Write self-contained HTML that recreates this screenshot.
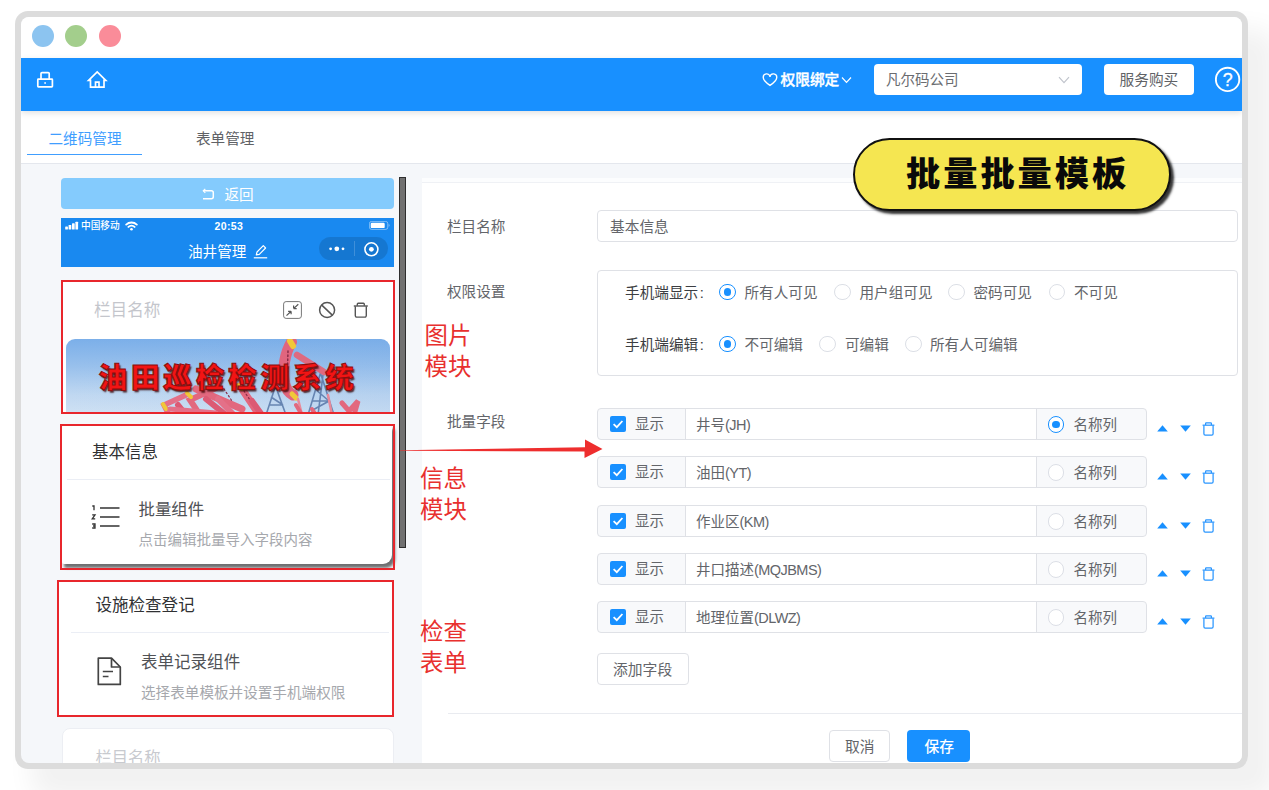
<!DOCTYPE html>
<html lang="zh-CN">
<head>
<meta charset="utf-8">
<title>批量批量模板</title>
<style>
*{box-sizing:border-box;margin:0;padding:0}
html,body{width:1269px;height:790px;overflow:hidden;background:#fff}
body{font-family:"Liberation Sans","Noto Sans CJK SC",sans-serif;color:#63656a;position:relative}
.abs{position:absolute}
.t{position:absolute;white-space:nowrap;line-height:20px;height:20px;font-size:14.6px}
/* window frame */
#shadow{left:15px;top:11px;width:1233px;height:758px;border-radius:13px;box-shadow:22px 24px 26px 6px rgba(0,0,0,.055)}
#frame{left:15px;top:11px;width:1233px;height:758px;border-radius:13px;background:#dcdcdc}
#win{left:21px;top:17px;width:1221px;height:746px;border-radius:8px;background:#f5f7fa;overflow:hidden}
/* everything inside #win uses page coords via offset wrapper */
#pg{position:absolute;left:-21px;top:-17px;width:1269px;height:790px}
.dot{width:22px;height:22px;border-radius:50%;top:25px}
#topbar{left:21px;top:17px;width:1221px;height:41px;background:#fff}
#blue{left:21px;top:58px;width:1221px;height:53px;background:#1890ff;box-shadow:0 2px 6px rgba(0,0,0,.12)}
#tabs{left:21px;top:111px;width:1221px;height:53px;background:#fff;border-bottom:1px solid #e4e7ed}
.red{border:2px solid #e8262c}
.card{background:#fff;border-radius:8px}
.inp{background:#fff;border:1px solid #dfe1e6;border-radius:4px}
.radio{width:16.5px;height:16.5px;margin:-.25px 0 0 -.25px;border-radius:50%;border:1px solid #dcdfe6;background:#fff}
.radio.on{border-color:#1890ff}
.radio.on::after{content:"";position:absolute;left:3.500px;top:3.500px;width:7.500px;height:7.500px;border-radius:50%;background:#1890ff}
.cb{width:16px;height:16px;border-radius:2px;background:#1890ff}
.anno{color:#e8302e;font-size:23.4px;line-height:30.5px;height:auto;white-space:pre}
</style>
</head>
<body>
<div class="abs" id="shadow"></div>
<div class="abs" id="frame"></div>
<div class="abs" id="win"><div id="pg">

<div class="abs" id="topbar"></div>
<div class="abs dot" style="left:32px;background:#8cc4f0"></div>
<div class="abs dot" style="left:65px;background:#a3ce8c"></div>
<div class="abs dot" style="left:98.5px;background:#fa8c99"></div>

<div class="abs" id="tabs"></div>
<div class="abs" id="blue"></div>

<!-- SECTION:HEADER -->
<svg class="abs" style="left:35px;top:69px" width="20" height="20" viewBox="0 0 20 20" fill="none" stroke="#fff" stroke-width="1.7">
 <rect x="2.8" y="10.2" width="14.6" height="7.6" rx=".6"/>
 <path d="M6 10.2V4.6a1 1 0 0 1 1-1h6.2a1 1 0 0 1 1 1v5.600"/>
 <rect x="9.300" y="13.2" width="1.6" height="1.6" fill="#fff" stroke="none"/>
</svg>
<svg class="abs" style="left:86px;top:69px" width="22" height="20" viewBox="0 0 22 20" fill="none" stroke="#fff" stroke-width="1.7" stroke-linejoin="miter">
 <path d="M2.600 11.400L11.200 2.900L19.800 11.400H18V18.100H4.500V11.400Z"/>
 <path d="M9.500 18.100V13.200H13V18.100"/>
</svg>
<svg class="abs" style="left:762px;top:72.500px" width="16" height="14" viewBox="0 0 16 14" fill="none" stroke="#fff" stroke-width="1.4">
 <path d="M8 12.400C4 9.600 1.300 7.400 1.300 4.700a3.200 3.200 0 0 1 6.700-.9a3.200 3.200 0 0 1 6.700.9c0 2.700-2.700 4.900-6.700 7.700Z"/>
</svg>
<div class="t" style="left:780.500px;top:69.500px;color:#fff;font-weight:500;-webkit-text-stroke:.35px #fff;font-size:14.7px;letter-spacing:0">权限绑定</div>
<svg class="abs" style="left:841px;top:75.500px" width="11" height="8" viewBox="0 0 11 8" fill="none" stroke="#fff" stroke-width="1.2"><path d="M1 1.500L5.500 6.300L10 1.500"/></svg>
<div class="abs" style="left:874px;top:64px;width:208px;height:31px;background:#fff;border-radius:4px"></div>
<div class="t" style="left:886px;top:69.500px;color:#6a6c70;font-size:14.5px">凡尔码公司</div>
<svg class="abs" style="left:1058px;top:75.500px" width="12" height="8" viewBox="0 0 12 8" fill="none" stroke="#c0c4cc" stroke-width="1.2"><path d="M1 1.200L6 6.600L11 1.200"/></svg>
<div class="abs" style="left:1103.500px;top:64px;width:90.500px;height:31px;background:#fff;border-radius:4px"></div>
<div class="t" style="left:1119.500px;top:69.500px;color:#606266;font-size:14.7px">服务购买</div>
<svg class="abs" style="left:1213px;top:65px" width="29" height="29" viewBox="0 0 29 29"><circle cx="14.600" cy="14.400" r="11.700" fill="none" stroke="#fff" stroke-width="1.900"/></svg>
<div class="t" style="left:1222.700px;top:70px;color:#fff;font-size:17.8px;-webkit-text-stroke:.3px #fff;font-family:'Liberation Sans',sans-serif">?</div>
<!-- tabs -->
<div class="t" style="left:48.500px;top:128.500px;color:#409eff;font-size:14.6px">二维码管理</div>
<div class="abs" style="left:27px;top:153.500px;width:115px;height:1.600px;background:#409eff"></div>
<div class="t" style="left:196px;top:128.500px;color:#606266;font-size:14.6px">表单管理</div>

<!-- SECTION:LEFT -->
<!-- return button -->
<div class="abs" style="left:61px;top:177.500px;width:333px;height:31px;background:#84cbfd;border-radius:4px"></div>
<svg class="abs" style="left:202px;top:188px" width="13" height="13" viewBox="0 0 13 13" fill="none" stroke="#fff" stroke-width="1.5"><path d="M1.500 2.800H9.300a2 2 0 0 1 2 2V8.700a2 2 0 0 1-2 2H1"/><path d="M3.300 .8L1.300 2.800L3.300 4.800" stroke-width="1.2"/></svg>
<div class="t" style="left:224.500px;top:184.500px;color:#fff;font-size:14.6px">返回</div>
<!-- phone header -->
<div class="abs" style="left:61px;top:217.500px;width:333px;height:49px;background:#1989f0"></div>
<svg class="abs" style="left:65px;top:221px" width="14" height="9" viewBox="0 0 14 9" fill="#fff"><rect x=".2" y="5.400" width="2.700" height="3.200" rx=".6"/><rect x="3.600" y="3.900" width="2.700" height="4.700" rx=".6"/><rect x="7" y="2.300" width="2.700" height="6.300" rx=".6"/><rect x="10.400" y=".7" width="2.700" height="7.900" rx=".6"/></svg>
<div class="t" style="left:81px;top:215.500px;color:#fff;font-size:9.7px;font-weight:500">中国移动</div>
<svg class="abs" style="left:124.500px;top:220.500px" width="13" height="10" viewBox="0 0 13 10" fill="none" stroke="#fff" stroke-width="1.9" stroke-linecap="round"><path d="M1.200 3.600a7.600 7.600 0 0 1 10.600 0"/><path d="M3.400 5.900a4.500 4.500 0 0 1 6.200 0"/><circle cx="6.500" cy="8.300" r="1.300" fill="#fff" stroke="none"/></svg>
<div class="t" style="left:214.500px;top:215.500px;color:#fff;font-size:10.5px;font-weight:700;letter-spacing:.35px;font-family:'Liberation Sans',sans-serif">20:53</div>
<svg class="abs" style="left:369px;top:221px" width="22" height="9" viewBox="0 0 22 9"><rect x=".4" y=".4" width="18.400" height="8" rx="2.200" fill="none" stroke="#fff" stroke-opacity=".55" stroke-width=".8"/><rect x="1.700" y="1.700" width="14" height="5.400" rx="1.200" fill="#fff"/><path d="M19.800 3v2.800c.9-.3.900-2.500 0-2.800Z" fill="#fff" fill-opacity=".6"/></svg>
<div class="t" style="left:188px;top:242px;color:#fff;font-size:14.6px">油井管理</div>
<svg class="abs" style="left:252.500px;top:243.500px" width="15" height="15" viewBox="0 0 15 15" fill="none" stroke="#fff" stroke-width="1.2" stroke-linejoin="round"><path d="M.8 13.800H14.200"/><path d="M3.300 10.800L4 8L10.300 1.700L12.600 4L6.300 10.300Z"/></svg>
<div class="abs" style="left:319px;top:237px;width:69px;height:23px;border-radius:12px;background:rgba(0,0,0,.13)"></div>
<div class="abs" style="left:354px;top:241px;width:1px;height:15px;background:rgba(255,255,255,.18)"></div>
<svg class="abs" style="left:327px;top:244px" width="20" height="10" viewBox="0 0 20 10" fill="#fff"><circle cx="3.600" cy="4.800" r="1.400"/><circle cx="9.800" cy="4.800" r="2.400"/><circle cx="16" cy="4.800" r="1.400"/></svg>
<svg class="abs" style="left:363px;top:240.500px" width="17" height="17" viewBox="0 0 17 17"><circle cx="8.400" cy="8.300" r="6.500" fill="none" stroke="#fff" stroke-width="1.600"/><circle cx="8.400" cy="8.300" r="2.400" fill="#fff"/></svg>

<!-- card 1 (image module) -->
<div class="abs" style="left:61px;top:280px;width:333px;height:133px;background:#fff;overflow:hidden">
 <div class="abs" style="left:4.500px;top:58.500px;width:324.500px;height:90px;border-radius:9px;overflow:hidden;background:linear-gradient(180deg,#7bafe9 0%,#98c0ec 30%,#c0d8f1 62%,#dbe8f5 100%)">
<svg class="abs" style="left:0;top:0" width="325" height="90" viewBox="0 0 325 90">
  <defs><linearGradient id="skyr" x1="0" y1="0" x2="1" y2="0"><stop offset="0" stop-color="#8fb9ea" stop-opacity=".0"/><stop offset="1" stop-color="#6c9fe0" stop-opacity=".12"/></linearGradient></defs>
  <rect width="325" height="90" fill="url(#skyr)"/>
  <g fill="none" stroke="#5d7cab" stroke-width="1.600" opacity=".9">
   <path d="M254.500 34L242 76M254.500 34L268 76M257 36L252 76M246 62H264M249 50L263 62L245 72"/>
   <path d="M209.500 47L200 76M209.500 47L220 76M203 66H217M205 58L217 66"/>
  </g>
  <g stroke-linecap="round" fill="none">
   <path d="M225.500 3C219 14 216 30 218.500 44C220 50 223 54 227 56" stroke="#e0657e" stroke-width="11"/>
   <path d="M231 16L258 33" stroke="#de6a80" stroke-width="6.500"/>
   <path d="M224 2L227 7" stroke="#f0c838" stroke-width="6"/>
   <path d="M226 55L230 59" stroke="#f0c838" stroke-width="5"/>
   <path d="M222 12L221 44" stroke="#8a2c48" stroke-width="1.500" stroke-dasharray="1.500 2.500"/>
   <path d="M130 50L176 70" stroke="#e2687e" stroke-width="7"/>
   <path d="M174 47L192 74" stroke="#e2687e" stroke-width="7.500"/>
   <path d="M150 49L124 61L134 76" stroke="#e2687e" stroke-width="6"/>
   <path d="M178 52L190 70" stroke="#8a2c48" stroke-width="1.200" stroke-dasharray="1.500 2.500"/>
   <path d="M120 56L98 66L103 76" stroke="#e47088" stroke-width="5.500"/>
   <path d="M152 60L168 76" stroke="#e47088" stroke-width="6"/>
   <path d="M121 54L125 58" stroke="#f0c838" stroke-width="4"/>
   <path d="M97 65L100 70" stroke="#f0c838" stroke-width="4"/>
   <path d="M172 46L176 50" stroke="#f0c838" stroke-width="4"/>
   <path d="M276 64L283 72L292 62L288 76" stroke="#e2687e" stroke-width="5"/>
   <path d="M232 60L236 76M262 56L266 76" stroke="#e88a9a" stroke-width="2.500"/>
   <path d="M140 60L160 76M112 66L120 76M186 62L196 76" stroke="#dc5a74" stroke-width="6"/>
   <path d="M104 70L150 74" stroke="#e47088" stroke-width="5"/>
   <path d="M158 50L166 62" stroke="#8a2c48" stroke-width="1.200" stroke-dasharray="1.500 2.500"/>
   <path d="M230 66L236 76M246 70L250 76" stroke="#e2687e" stroke-width="4"/>
  </g>
</svg>
  <div class="t" style="left:33px;top:19.500px;height:40px;line-height:40px;font-size:28.6px;font-weight:900;letter-spacing:3.800px;color:#f21414;-webkit-text-stroke:1px #8a0e0e;text-shadow:1.500px 2px 1.500px rgba(50,0,0,.8)">油田巡检检测系统</div>
 </div>
</div>
<div class="t" style="left:94px;top:300.500px;color:#c4c6cc;font-size:16.6px">栏目名称</div>
<svg class="abs" style="left:283px;top:300.500px" width="19" height="18" viewBox="0 0 19 18" fill="none" stroke="#555" stroke-width="1"><rect x=".6" y=".6" width="17.800" height="16.800" rx="2.500" stroke="#777"/><path d="M15.300 3.200L10.600 7.600M10.600 7.600V4.600M10.600 7.600H13.700" stroke-width="1.200"/><path d="M3.500 14.600L8.100 10.300M8.100 10.300V13.300M8.100 10.300H5.100" stroke-width="1.200"/></svg>
<svg class="abs" style="left:317.500px;top:300.500px" width="18" height="18" viewBox="0 0 18 18" fill="none" stroke="#555" stroke-width="1.500"><circle cx="9.100" cy="9" r="7.500"/><path d="M3.800 4.100L14.300 14.100"/></svg>
<svg class="abs" style="left:352.500px;top:301.500px" width="16" height="16" viewBox="0 0 16 16" fill="none" stroke="#555" stroke-width="1.400"><path d="M.8 4H14.800"/><path d="M4.300 3.800V2.200a.9.900 0 0 1 .9-.9h5.200a.9.900 0 0 1 .9.900V3.800"/><path d="M2.300 4.200V13.600a1.500 1.500 0 0 0 1.500 1.500h8a1.500 1.500 0 0 0 1.500-1.500V4.200"/></svg>
<div class="abs red" style="left:60.500px;top:279.500px;width:334px;height:134px"></div>

<!-- scrollbar -->
<div class="abs" style="left:398.500px;top:176.500px;width:7.500px;height:371px;background:#717171;border:1px solid #2e2e2e"></div>

<!-- card 2 (basic info) -->
<div class="abs card" style="left:62px;top:426px;width:330px;height:138px;border-radius:2px 2px 9px 2px;box-shadow:2.500px 3.500px 3px rgba(0,0,0,.55)"></div>
<div class="t" style="left:92px;top:441.600px;color:#303133;font-size:16.5px">基本信息</div>
<div class="abs" style="left:66.500px;top:479px;width:323px;height:1px;background:#ebeef5"></div>
<svg class="abs" style="left:91px;top:503px" width="30" height="27" viewBox="0 0 30 27" fill="none" stroke="#333" stroke-width="1.700"><path d="M9 5H28.500M9 14H28.500M9 23H28.500"/><g stroke-width="1.300"><path d="M1.300 3H3V7.200"/><path d="M1.200 11.800H4L1.200 15.800H4.200"/><path d="M1.200 21H4V25H1.200M2 23H4"/></g></svg>
<div class="t" style="left:138.500px;top:498.700px;color:#505256;font-size:16.4px">批量组件</div>
<div class="t" style="left:138.500px;top:529.500px;color:#a6a8ad;font-size:14.5px">点击编辑批量导入字段内容</div>
<div class="abs red" style="left:60px;top:424px;width:334.500px;height:146px"></div>

<!-- card 3 (check form) -->
<div class="abs" style="left:57px;top:580px;width:336.500px;height:136px;background:#fff"></div>
<div class="t" style="left:95.500px;top:596.200px;color:#303133;font-size:16.55px">设施检查登记</div>
<div class="abs" style="left:71px;top:631.500px;width:318px;height:1px;background:#ebeef5"></div>
<svg class="abs" style="left:97px;top:656.500px" width="25" height="29" viewBox="0 0 25 29" fill="none" stroke="#444" stroke-width="1.700" stroke-linejoin="round"><path d="M1.300 1.200H14.500L23.300 10V27.400H1.300Z"/><path d="M14.500 1.200V10H23.300"/><path d="M5.800 14.500H16M5.800 19.500H11.500"/></svg>
<div class="t" style="left:141px;top:653px;color:#505256;font-size:16.55px">表单记录组件</div>
<div class="t" style="left:141px;top:682.500px;color:#a6a8ad;font-size:14.6px">选择表单模板并设置手机端权限</div>
<div class="abs red" style="left:56.500px;top:579.500px;width:337.500px;height:137.500px"></div>

<!-- card 4 (bottom) -->
<div class="abs card" style="left:61.500px;top:727.500px;width:332px;height:60px;border:1px solid #eceef3"></div>
<div class="t" style="left:95.500px;top:747px;color:#c8cacf;font-size:16.3px">栏目名称</div>

<!-- SECTION:RIGHT -->
<div class="abs" style="left:421.500px;top:177.500px;width:830px;height:600px;background:#fff"></div>
<div class="abs" style="left:421.500px;top:177.500px;width:830px;height:5.500px;background:#fcfdfe;border-bottom:1px solid #eff1f5"></div>
<div class="t" style="left:447px;top:217px;font-size:14.6px">栏目名称</div>
<div class="abs inp" style="left:597px;top:210px;width:641px;height:32px"></div>
<div class="t" style="left:610px;top:217px;font-size:14.7px">基本信息</div>
<div class="t" style="left:447px;top:281.500px;font-size:14.6px">权限设置</div>
<div class="abs inp" style="left:597px;top:270px;width:641px;height:106px"></div>
<div class="t" style="left:625px;top:282.500px;font-size:14.65px;color:#3c3e42">手机端显示<span style="margin-left:1.500px">:</span></div>
<div class="abs radio on" style="left:719.500px;top:284px"></div>
<div class="t" style="left:744.500px;top:282.500px;font-size:14.6px">所有人可见</div>
<div class="abs radio" style="left:834.500px;top:284px"></div>
<div class="t" style="left:859.500px;top:282.500px;font-size:14.6px">用户组可见</div>
<div class="abs radio" style="left:948.500px;top:284px"></div>
<div class="t" style="left:973.500px;top:282.500px;font-size:14.6px">密码可见</div>
<div class="abs radio" style="left:1049px;top:284px"></div>
<div class="t" style="left:1074px;top:282.500px;font-size:14.6px">不可见</div>
<div class="t" style="left:625px;top:334.500px;font-size:14.65px;color:#3c3e42">手机端编辑<span style="margin-left:1.500px">:</span></div>
<div class="abs radio on" style="left:719.500px;top:336px"></div>
<div class="t" style="left:744.500px;top:334.500px;font-size:14.6px">不可编辑</div>
<div class="abs radio" style="left:819.500px;top:336px"></div>
<div class="t" style="left:845px;top:334.500px;font-size:14.6px">可编辑</div>
<div class="abs radio" style="left:905.500px;top:336px"></div>
<div class="t" style="left:930px;top:334.500px;font-size:14.6px">所有人可编辑</div>
<div class="t" style="left:447px;top:411.500px;font-size:14.6px">批量字段</div>
<div class="abs inp" style="left:597px;top:408px;width:549.500px;height:32px;background:#f8f9fb"></div>
<div class="abs" style="left:684.500px;top:409px;width:352px;height:30px;background:#fff;border-left:1px solid #dfe1e6;border-right:1px solid #dfe1e6"></div>
<div class="abs cb" style="left:610px;top:415.8px"><svg class="abs" style="left:0;top:0" width="16" height="16" viewBox="0 0 16 16" fill="none" stroke="#fff" stroke-width="1.800"><path d="M3.600 8.200L6.800 11.200L12.400 5"/></svg></div>
<div class="t" style="left:635px;top:413.7px;font-size:14.4px">显示</div>
<div class="t" style="left:696px;top:415.2px;font-size:14.5px">井号<span style="letter-spacing:-.55px">(JH)</span></div>
<div class="abs radio on" style="left:1048.200px;top:416.4px"></div>
<div class="t" style="left:1073.500px;top:414.9px;font-size:14.5px">名称列</div>
<svg class="abs" style="left:1156.500px;top:425.2px" width="11" height="7" viewBox="0 0 11 7"><path d="M5.500 .2L10.800 6.600H.2Z" fill="#1890ff"/></svg>
<svg class="abs" style="left:1179.500px;top:425.2px" width="11" height="7" viewBox="0 0 11 7"><path d="M5.500 6.800L10.800 .4H.2Z" fill="#1890ff"/></svg>
<svg class="abs" style="left:1201.500px;top:421.8px" width="13" height="14" viewBox="0 0 13 14" fill="none" stroke="#2a96ff" stroke-width="1.250"><path d="M.6 3.200H12.400"/><path d="M3.600 3V1.600a.7.700 0 0 1 .7-.7h4.400a.7.700 0 0 1 .7.700V3"/><path d="M1.900 3.400V11.800a1.300 1.300 0 0 0 1.300 1.300h6.600a1.300 1.300 0 0 0 1.300-1.300V3.400"/></svg>
<div class="abs inp" style="left:597px;top:456px;width:549.500px;height:32px;background:#f8f9fb"></div>
<div class="abs" style="left:684.500px;top:457px;width:352px;height:30px;background:#fff;border-left:1px solid #dfe1e6;border-right:1px solid #dfe1e6"></div>
<div class="abs cb" style="left:610px;top:463.8px"><svg class="abs" style="left:0;top:0" width="16" height="16" viewBox="0 0 16 16" fill="none" stroke="#fff" stroke-width="1.800"><path d="M3.600 8.200L6.800 11.200L12.400 5"/></svg></div>
<div class="t" style="left:635px;top:461.7px;font-size:14.4px">显示</div>
<div class="t" style="left:696px;top:463.2px;font-size:14.5px">油田<span style="letter-spacing:-.55px">(YT)</span></div>
<div class="abs radio" style="left:1048.200px;top:464.4px"></div>
<div class="t" style="left:1073.500px;top:462.9px;font-size:14.5px">名称列</div>
<svg class="abs" style="left:1156.500px;top:473.2px" width="11" height="7" viewBox="0 0 11 7"><path d="M5.500 .2L10.800 6.600H.2Z" fill="#1890ff"/></svg>
<svg class="abs" style="left:1179.500px;top:473.2px" width="11" height="7" viewBox="0 0 11 7"><path d="M5.500 6.800L10.800 .4H.2Z" fill="#1890ff"/></svg>
<svg class="abs" style="left:1201.500px;top:469.8px" width="13" height="14" viewBox="0 0 13 14" fill="none" stroke="#2a96ff" stroke-width="1.250"><path d="M.6 3.200H12.400"/><path d="M3.600 3V1.600a.7.700 0 0 1 .7-.7h4.400a.7.700 0 0 1 .7.700V3"/><path d="M1.900 3.400V11.800a1.300 1.300 0 0 0 1.300 1.300h6.600a1.300 1.300 0 0 0 1.300-1.300V3.400"/></svg>
<div class="abs inp" style="left:597px;top:505px;width:549.500px;height:32px;background:#f8f9fb"></div>
<div class="abs" style="left:684.500px;top:506px;width:352px;height:30px;background:#fff;border-left:1px solid #dfe1e6;border-right:1px solid #dfe1e6"></div>
<div class="abs cb" style="left:610px;top:512.8px"><svg class="abs" style="left:0;top:0" width="16" height="16" viewBox="0 0 16 16" fill="none" stroke="#fff" stroke-width="1.800"><path d="M3.600 8.200L6.800 11.200L12.400 5"/></svg></div>
<div class="t" style="left:635px;top:510.7px;font-size:14.4px">显示</div>
<div class="t" style="left:696px;top:512.2px;font-size:14.5px">作业区<span style="letter-spacing:-.55px">(KM)</span></div>
<div class="abs radio" style="left:1048.200px;top:513.4px"></div>
<div class="t" style="left:1073.500px;top:511.9px;font-size:14.5px">名称列</div>
<svg class="abs" style="left:1156.500px;top:522.2px" width="11" height="7" viewBox="0 0 11 7"><path d="M5.500 .2L10.800 6.600H.2Z" fill="#1890ff"/></svg>
<svg class="abs" style="left:1179.500px;top:522.2px" width="11" height="7" viewBox="0 0 11 7"><path d="M5.500 6.800L10.800 .4H.2Z" fill="#1890ff"/></svg>
<svg class="abs" style="left:1201.500px;top:518.8px" width="13" height="14" viewBox="0 0 13 14" fill="none" stroke="#2a96ff" stroke-width="1.250"><path d="M.6 3.200H12.400"/><path d="M3.600 3V1.600a.7.700 0 0 1 .7-.7h4.400a.7.700 0 0 1 .7.700V3"/><path d="M1.900 3.400V11.800a1.300 1.300 0 0 0 1.300 1.300h6.600a1.300 1.300 0 0 0 1.300-1.300V3.400"/></svg>
<div class="abs inp" style="left:597px;top:553px;width:549.500px;height:32px;background:#f8f9fb"></div>
<div class="abs" style="left:684.500px;top:554px;width:352px;height:30px;background:#fff;border-left:1px solid #dfe1e6;border-right:1px solid #dfe1e6"></div>
<div class="abs cb" style="left:610px;top:560.8px"><svg class="abs" style="left:0;top:0" width="16" height="16" viewBox="0 0 16 16" fill="none" stroke="#fff" stroke-width="1.800"><path d="M3.600 8.200L6.800 11.200L12.400 5"/></svg></div>
<div class="t" style="left:635px;top:558.7px;font-size:14.4px">显示</div>
<div class="t" style="left:696px;top:560.2px;font-size:14.5px">井口描述<span style="letter-spacing:-.55px">(MQJBMS)</span></div>
<div class="abs radio" style="left:1048.200px;top:561.4px"></div>
<div class="t" style="left:1073.500px;top:559.9px;font-size:14.5px">名称列</div>
<svg class="abs" style="left:1156.500px;top:570.2px" width="11" height="7" viewBox="0 0 11 7"><path d="M5.500 .2L10.800 6.600H.2Z" fill="#1890ff"/></svg>
<svg class="abs" style="left:1179.500px;top:570.2px" width="11" height="7" viewBox="0 0 11 7"><path d="M5.500 6.800L10.800 .4H.2Z" fill="#1890ff"/></svg>
<svg class="abs" style="left:1201.500px;top:566.8px" width="13" height="14" viewBox="0 0 13 14" fill="none" stroke="#2a96ff" stroke-width="1.250"><path d="M.6 3.200H12.400"/><path d="M3.600 3V1.600a.7.700 0 0 1 .7-.7h4.400a.7.700 0 0 1 .7.700V3"/><path d="M1.900 3.400V11.800a1.300 1.300 0 0 0 1.300 1.300h6.600a1.300 1.300 0 0 0 1.300-1.300V3.400"/></svg>
<div class="abs inp" style="left:597px;top:601px;width:549.500px;height:32px;background:#f8f9fb"></div>
<div class="abs" style="left:684.500px;top:602px;width:352px;height:30px;background:#fff;border-left:1px solid #dfe1e6;border-right:1px solid #dfe1e6"></div>
<div class="abs cb" style="left:610px;top:608.8px"><svg class="abs" style="left:0;top:0" width="16" height="16" viewBox="0 0 16 16" fill="none" stroke="#fff" stroke-width="1.800"><path d="M3.600 8.200L6.800 11.200L12.400 5"/></svg></div>
<div class="t" style="left:635px;top:606.7px;font-size:14.4px">显示</div>
<div class="t" style="left:696px;top:608.2px;font-size:14.5px">地理位置<span style="letter-spacing:-.55px">(DLWZ)</span></div>
<div class="abs radio" style="left:1048.200px;top:609.4px"></div>
<div class="t" style="left:1073.500px;top:607.9px;font-size:14.5px">名称列</div>
<svg class="abs" style="left:1156.500px;top:618.2px" width="11" height="7" viewBox="0 0 11 7"><path d="M5.500 .2L10.800 6.600H.2Z" fill="#1890ff"/></svg>
<svg class="abs" style="left:1179.500px;top:618.2px" width="11" height="7" viewBox="0 0 11 7"><path d="M5.500 6.800L10.800 .4H.2Z" fill="#1890ff"/></svg>
<svg class="abs" style="left:1201.500px;top:614.8px" width="13" height="14" viewBox="0 0 13 14" fill="none" stroke="#2a96ff" stroke-width="1.250"><path d="M.6 3.200H12.400"/><path d="M3.600 3V1.600a.7.700 0 0 1 .7-.7h4.400a.7.700 0 0 1 .7.700V3"/><path d="M1.900 3.400V11.800a1.300 1.300 0 0 0 1.300 1.300h6.600a1.300 1.300 0 0 0 1.300-1.300V3.400"/></svg>
<div class="abs inp" style="left:597px;top:653px;width:91.500px;height:32px"></div>
<div class="t" style="left:613px;top:660px;font-size:14.8px">添加字段</div>
<div class="abs" style="left:448px;top:712.500px;width:800px;height:1px;background:#e9ebf0"></div>
<div class="abs inp" style="left:829px;top:730px;width:61px;height:31.500px"></div>
<div class="t" style="left:845px;top:736.500px;font-size:14.8px">取消</div>
<div class="abs" style="left:907px;top:730px;width:62.500px;height:31.500px;background:#1890ff;border-radius:4px"></div>
<div class="t" style="left:924.500px;top:736.500px;font-size:14.8px;color:#fff;font-weight:500">保存</div>

<!-- SECTION:OVERLAY -->
<div class="t anno" style="left:424.500px;top:321.300px">图片
模块</div>
<div class="t anno" style="left:420px;top:463.800px;line-height:30.800px">信息
模块</div>
<div class="t anno" style="left:420px;top:617.200px">检查
表单</div>
<svg class="abs" style="left:398px;top:436px" width="210" height="26" viewBox="0 0 210 26"><path d="M2 14.200L187 11.200V3.400L204.500 13L186.500 22V15.600L2 14.800Z" fill="#ee2e2e"/></svg>
<div class="abs" style="left:852.500px;top:138px;width:318.500px;height:72.500px;border-radius:37px;background:#f5e651;border:2px solid #111;box-shadow:3px 3px 2.500px rgba(0,0,0,.8)"></div>
<div class="t" style="left:906px;top:150.300px;height:48px;line-height:48px;font-size:34.2px;font-weight:900;letter-spacing:3px;color:#0a0a0a">批量批量模板</div>

</div></div>
</body>
</html>
